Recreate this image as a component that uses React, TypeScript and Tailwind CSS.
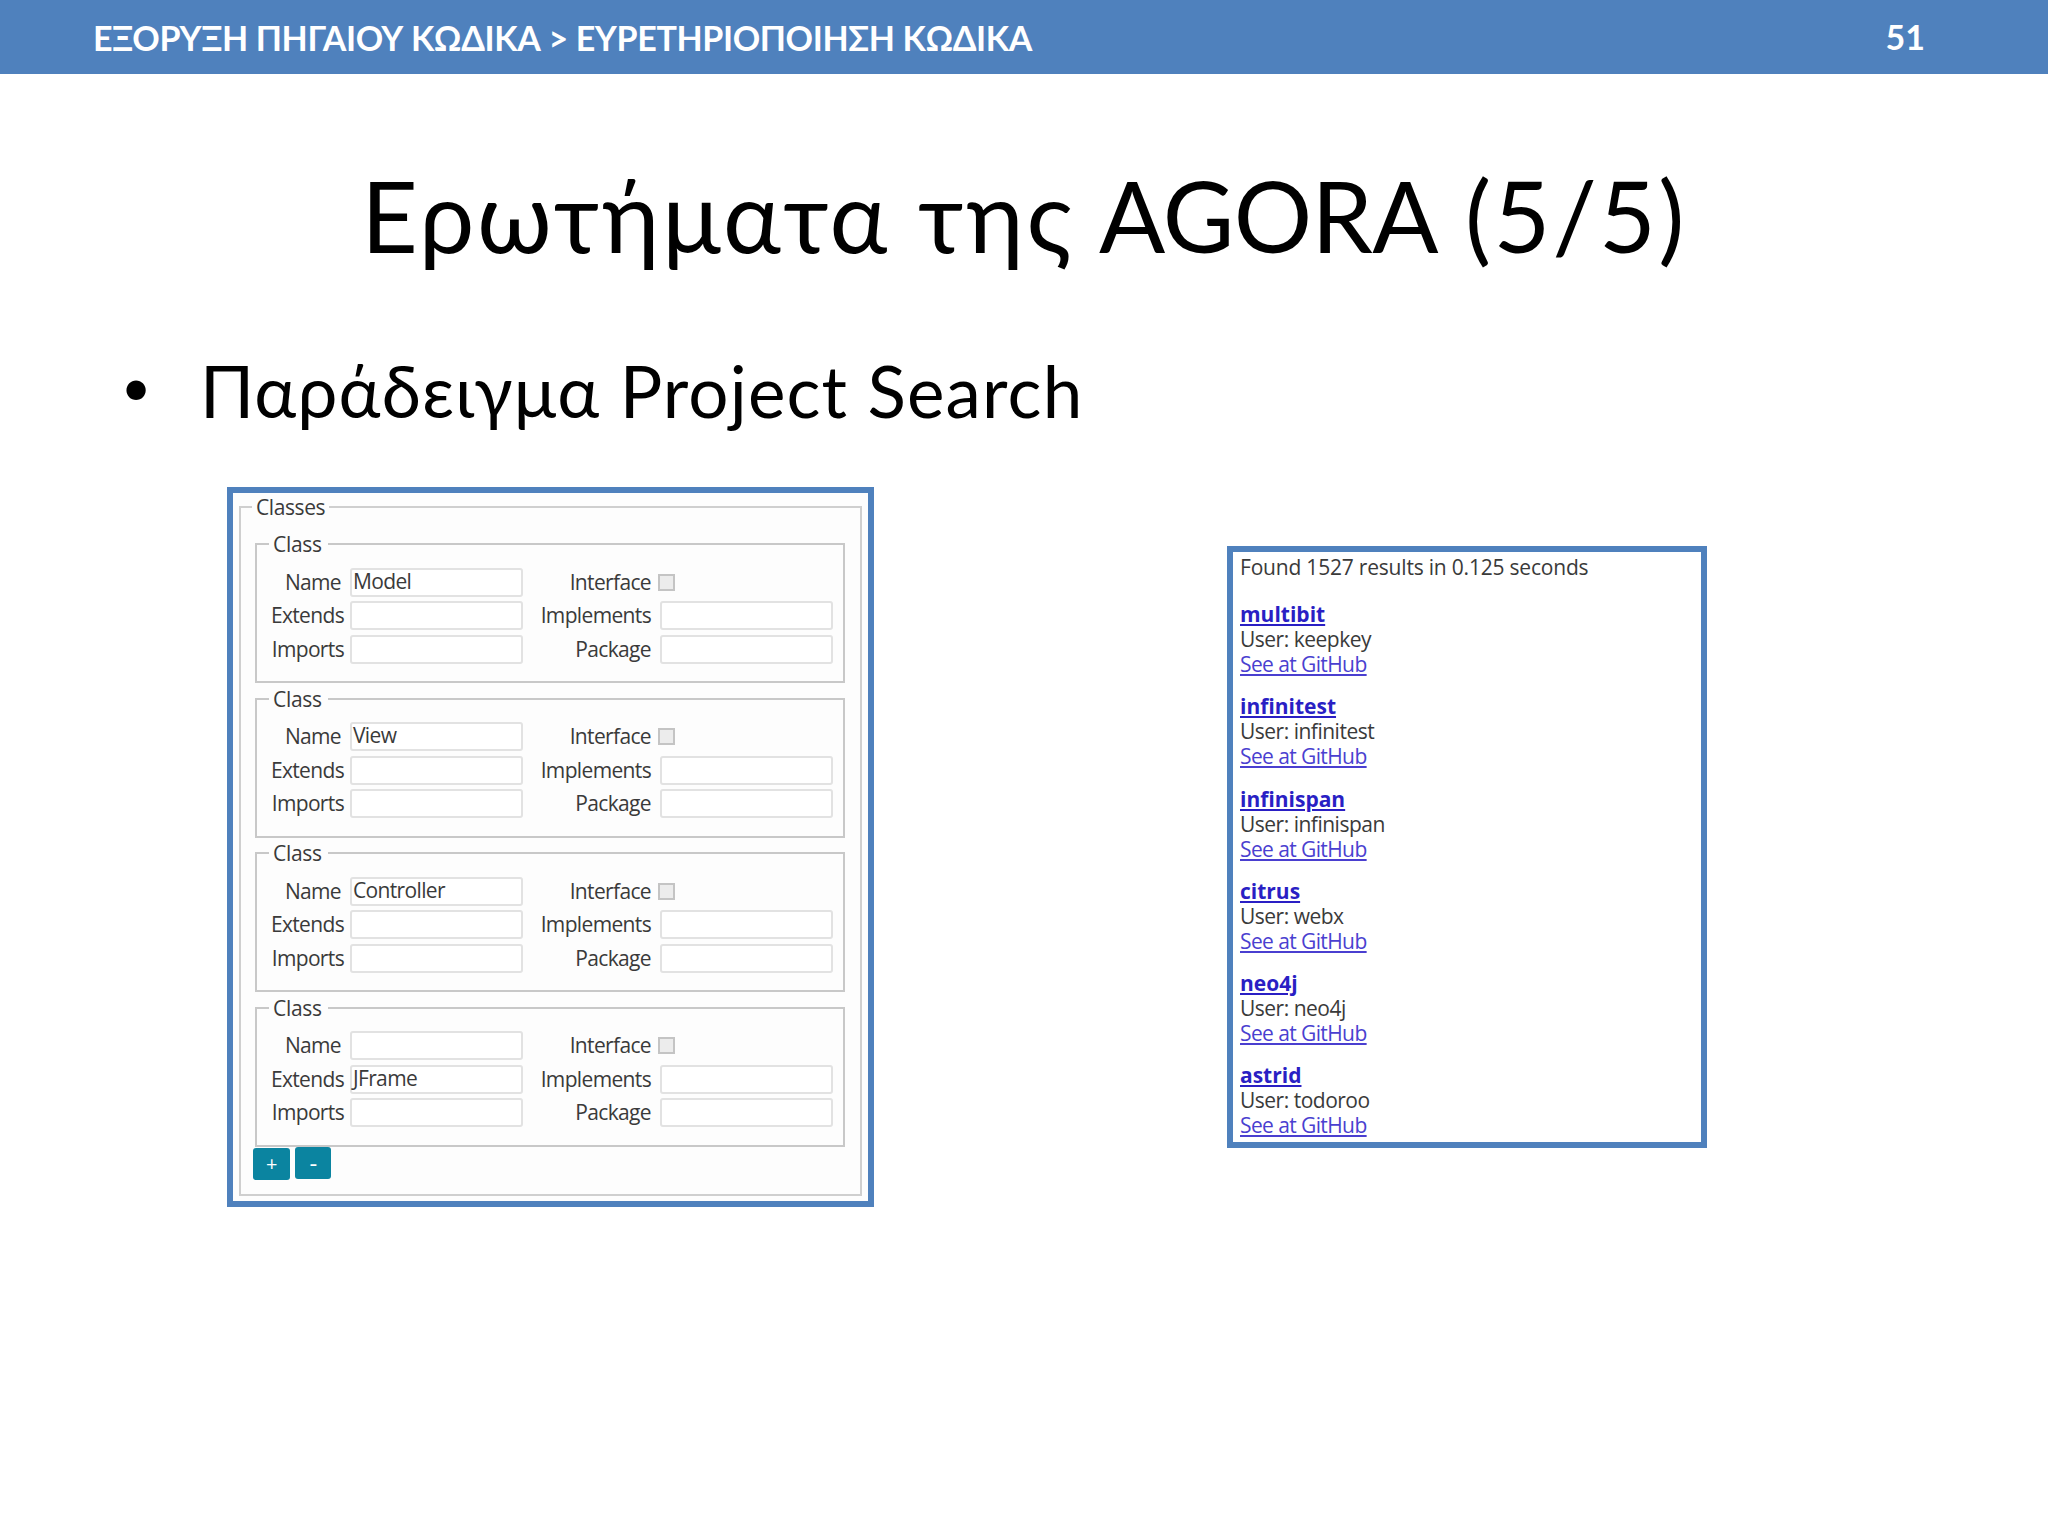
interface ClassQuery {
  name: string;
  parent: string;
}

interface Project {
  title: string;
  user: string;
}

const classQueries: ClassQuery[] = [
  { name: 'Model', parent: '' },
  { name: 'View', parent: '' },
  { name: 'Controller', parent: '' },
  { name: '', parent: 'JFrame' },
];

const projects: Project[] = [
  { title: 'multibit', user: 'keepkey' },
  { title: 'infinitest', user: 'infinitest' },
  { title: 'infinispan', user: 'infinispan' },
  { title: 'citrus', user: 'webx' },
  { title: 'neo4j', user: 'neo4j' },
  { title: 'astrid', user: 'todoroo' },
];

function Field({ value = '' }: { value?: string }) {
  return (
    <div className="h-[29px] w-[173px] rounded-[3px] border-2 border-[#e2e2e2] bg-white pl-px leading-[23px] whitespace-nowrap">
      {value}
    </div>
  );
}

function Label({ children, wide = false }: { children: string; wide?: boolean }) {
  return (
    <span className={`text-right leading-[29px] whitespace-nowrap ${wide ? '-mr-[3px]' : ''}`}>{children}</span>
  );
}

function ClassFieldset({ query }: { query: ClassQuery }) {
  return (
    <fieldset className="h-[149px] w-[590px] border-2 border-[#c8c8c8]">
      <legend className="ml-3 pr-1.5 pl-1 leading-5 tracking-[-0.3px]">Class</legend>
      <div className="mt-[13.5px] grid auto-rows-[33.5px] grid-cols-[84px_174px_118px_1fr] gap-x-[9px]">
        <Label>Name</Label>
        <Field value={query.name} />
        <Label>Interface</Label>
        <div className="mt-1.5 -ml-0.5 size-[17px] border-2 border-[#c4c4c4] bg-[#ececec]" />
        <Label wide>Extends</Label>
        <Field value={query.parent} />
        <Label>Implements</Label>
        <Field />
        <Label wide>Imports</Label>
        <Field />
        <Label>Package</Label>
        <Field />
      </div>
    </fieldset>
  );
}

function QueryPanel() {
  return (
    <section className="mt-[487px] h-[720px] w-[647px] border-[6px] border-[#4f81bd] bg-[#fdfdfd] px-1.5 pt-1 text-[21px] tracking-[-0.65px] text-[#3a3a3a]">
      <fieldset className="h-[699px] border-2 border-[#cfcfcf]">
        <legend className="ml-[11px] px-1 leading-5 tracking-[-0.4px]">Classes</legend>
        <div className="mt-[17px] ml-3.5 flex flex-col gap-[5.5px]">
          {classQueries.map((query, i) => (
            <ClassFieldset key={i} query={query} />
          ))}
        </div>
        <div className="mt-px ml-3 flex gap-[5px] text-white">
          <div className="flex h-8 w-[37px] items-center justify-center rounded-[3px] bg-[#0b84a0] text-xl">+</div>
          <div className="-mt-px flex h-8 w-[36px] items-center justify-center rounded-[3px] bg-[#0b84a0] text-2xl">-</div>
        </div>
      </fieldset>
    </section>
  );
}

function ResultsPanel() {
  return (
    <section className="h-[602px] w-[480px] border-[6px] border-[#4f81bd] bg-white pt-[3px] pl-[7px] text-[21px] leading-[25px] text-[#3a3a3a]">
      <p className="tracking-[-0.2px]">Found 1527 results in 0.125 seconds</p>
      <ul className="mt-[22px] flex flex-col gap-[17.3px]">
        {projects.map((project) => (
          <li key={project.title}>
            <div className="font-bold text-[#2a1fc4] underline">{project.title}</div>
            <div className="tracking-[-0.5px]">User: {project.user}</div>
            <div className="tracking-[-0.6px] text-[#4a3fd0] underline">See at GitHub</div>
          </li>
        ))}
      </ul>
    </section>
  );
}

export default function App() {
  return (
    <div className="h-[1536px] w-[2048px] overflow-hidden bg-white font-['Lato','Open_Sans',sans-serif] text-black">
      <header className="flex h-[74px] items-center justify-between bg-[#4f81bd] pr-[123px] pl-[93px] text-[34px] font-bold text-white">
        <span className="tracking-[-0.36px]">ΕΞΟΡΥΞΗ ΠΗΓΑΙΟΥ ΚΩΔΙΚΑ &gt; ΕΥΡΕΤΗΡΙΟΠΟΙΗΣΗ ΚΩΔΙΚΑ</span>
        <span className="-mt-0.5">51</span>
      </header>
      <h1 className="mt-[71px] text-center text-[98px] leading-[140px] whitespace-nowrap">
        <span className="tracking-[2.7px]">Ερωτήματα της</span>
        <span className="tracking-[-0.7px]"> AGORA </span>
        <span className="ml-1.5 tracking-[2.3px]">(5/5)</span>
      </h1>
      <div className="mt-[51px] flex h-[110px] items-center pl-[121px] text-[71px] whitespace-nowrap">
        <span className="w-[79px] pb-2.5 text-[52px]">•</span>
        <span className="tracking-[1.15px]">Παράδειγμα Project Search</span>
      </div>
      <main className="-mt-[446px] flex items-start font-['Open_Sans',sans-serif]">
        <div className="w-[227px]" />
        <QueryPanel />
        <div className="mt-[546px] ml-[353px]">
          <ResultsPanel />
        </div>
      </main>
    </div>
  );
}
